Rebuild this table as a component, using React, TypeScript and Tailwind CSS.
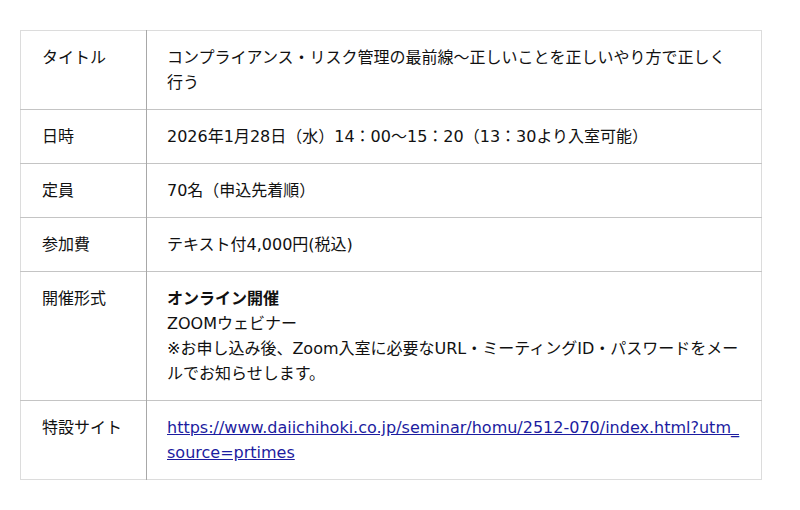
const rows: { label: string; value: React.ReactNode }[] = [
  {
    label: "タイトル",
    value: "コンプライアンス・リスク管理の最前線〜正しいことを正しいやり方で正しく行う",
  },
  { label: "日時", value: "2026年1月28日（水）14：00〜15：20（13：30より入室可能）" },
  { label: "定員", value: "70名（申込先着順）" },
  { label: "参加費", value: "テキスト付4,000円(税込)" },
  {
    label: "開催形式",
    value: (
      <>
        <span className="font-bold">オンライン開催</span>
        <br />
        ZOOMウェビナー
        <br />
        ※お申し込み後、Zoom入室に必要なURL・ミーティングID・パスワードをメールでお知らせします。
      </>
    ),
  },
  {
    label: "特設サイト",
    value: (
      <a href="#" className="text-[#1c1ca0] underline break-all">
        https://www.daiichihoki.co.jp/seminar/homu/2512-070/index.html?utm_source=prtimes
      </a>
    ),
  },
]

export default function App() {
  return (
    <div
      className="min-h-[510px] bg-white pt-[30px] pl-5 text-[16px] leading-[25px] text-[#111]"
      style={{ fontFamily: '"DejaVu Sans", "Noto Sans CJK JP", sans-serif' }}
    >
      <table className="w-[742px] border-collapse border border-[#dcdcdc]">
        <tbody>
          {rows.map((r, i) => (
            <tr key={i} className="border-b border-[#c4c4c4] last:border-b-[#dcdcdc]">
              <td className="w-[126px] border-r border-[#a8a8a8] py-[14px] pl-[21px] pr-2 align-top">
                {r.label}
              </td>
              <td className="py-[14px] pl-5 pr-5 align-top">{r.value}</td>
            </tr>
          ))}
        </tbody>
      </table>
    </div>
  )
}
